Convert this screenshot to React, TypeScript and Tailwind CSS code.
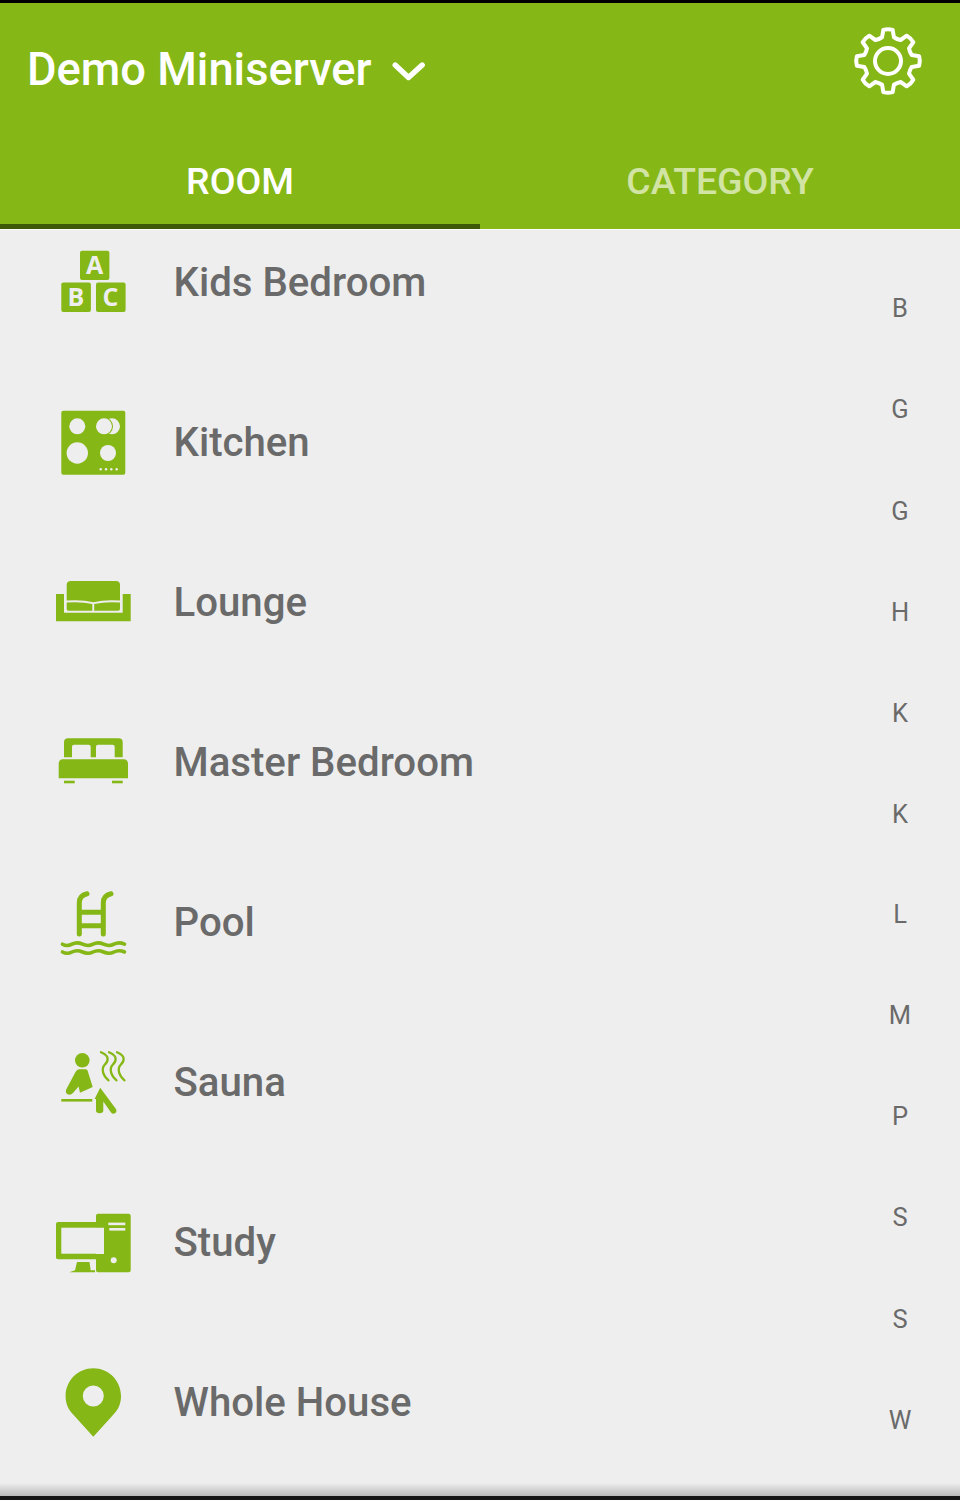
const G = "#85b716";
const BG = "#eeeeee";

function gearPath() {
  const cx = 40, cy = 40;
  const pt = (r: number, a: number) => {
    const t = ((a - 90) * Math.PI) / 180;
    return `${(cx + r * Math.cos(t)).toFixed(2)} ${(cy + r * Math.sin(t)).toFixed(2)}`;
  };
  let d = "";
  for (let i = 0; i < 8; i++) {
    const a = i * 45;
    d += `${i === 0 ? "M" : "L"}${pt(24.5, a - 14)} L${pt(31.5, a - 8.5)} Q${pt(32.5, a)} ${pt(31.5, a + 8.5)} L${pt(24.5, a + 14)} Q${pt(23.5, a + 22.5)} ${pt(24.5, a + 31)} `;
  }
  return d + "Z";
}

function Gear() {
  return (
    <svg width="80" height="80" viewBox="0 0 80 80" fill="none" stroke="white" strokeWidth="4" strokeLinejoin="round">
      <path d={gearPath()} />
      <circle cx="40" cy="40" r="13" />
    </svg>
  );
}

function Chevron() {
  return (
    <svg width="34" height="22" viewBox="0 0 34 22" fill="none" stroke="white" strokeWidth="5.4" strokeLinecap="round" strokeLinejoin="round">
      <path d="M3.2 4 L16.5 16.5 L30.2 4" />
    </svg>
  );
}

const font = "Roboto, sans-serif";

function Blocks() {
  const t = { fontFamily: "'Open Sans', sans-serif", fontWeight: 700, fontSize: 25, fill: BG, textAnchor: "middle" as const };
  return (
    <svg width="80" height="80" viewBox="0 0 80 80">
      <rect x="27" y="7.7" width="29.4" height="29.4" rx="2" fill={G} />
      <rect x="8.3" y="39.5" width="29.6" height="29.6" rx="2" fill={G} />
      <rect x="43" y="39.5" width="29.6" height="29.6" rx="2" fill={G} />
      <text x="41.7" y="31.2" {...t}>A</text>
      <text x="23" y="63" {...t}>B</text>
      <text x="57.5" y="63" {...t}>C</text>
    </svg>
  );
}

function Hob() {
  return (
    <svg width="80" height="80" viewBox="0 0 80 80">
      <rect x="8.3" y="7.7" width="64" height="64" rx="2" fill={G} />
      <circle cx="24.3" cy="23.3" r="8" fill={BG} />
      <circle cx="59" cy="23.3" r="8" fill={BG} />
      <circle cx="51" cy="23.3" r="9" fill={G} />
      <circle cx="51" cy="23.3" r="8" fill={BG} />
      <circle cx="24.3" cy="50" r="10.7" fill={BG} />
      <circle cx="55" cy="50" r="8" fill={BG} />
      {[47.7, 53, 58.3, 63.7].map((x) => (
        <circle key={x} cx={x} cy="66.3" r="1.2" fill={BG} />
      ))}
    </svg>
  );
}

function Sofa() {
  return (
    <svg width="80" height="80" viewBox="0 0 80 80" fill={G}>
      <path d="M3 31 H11 V49.7 H69.7 V31 H77.7 V58.3 H3 Z" />
      <path d="M18 18 H63 Q67 18 67 22 V37.6 Q52 36.5 40.4 39.2 Q29 36.5 13.7 37.6 V22 Q13.7 18 18 18 Z" />
      <path d="M13.7 39.6 Q28 38.5 39.3 41 V47.8 H15.5 Q13.7 47.8 13.7 46 Z" />
      <path d="M67 39.6 Q53 38.5 41.2 41 V47.8 H65 Q67 47.8 67 46 Z" />
    </svg>
  );
}

function Bed() {
  return (
    <svg width="80" height="80" viewBox="0 0 80 80" fill={G}>
      <path fillRule="evenodd" d="M15 15.3 H65.7 Q69.7 15.3 69.7 19.3 V34.3 H61.7 V23.7 Q61.7 21.7 59.7 21.7 H45 Q43 21.7 43 23.7 V34.3 H37.7 V23.7 Q37.7 21.7 35.7 21.7 H21 Q19 21.7 19 23.7 V34.3 H11 V19.3 Q11 15.3 15 15.3 Z" />
      <path d="M10 36.3 H70.7 Q75 36.3 75 41 V55.3 H5.7 V41 Q5.7 36.3 10 36.3 Z" />
      <rect x="11" y="57.7" width="10.7" height="2.6" />
      <rect x="59" y="57.7" width="10.7" height="2.6" />
    </svg>
  );
}

function Pool() {
  const wave = (y: number) =>
    `M9.5 ${y} Q14 ${y + 2.6} 19 ${y} T29.5 ${y} T40 ${y} T50.5 ${y} T61 ${y} T71.5 ${y}`;
  return (
    <svg width="80" height="80" viewBox="0 0 80 80" fill="none" stroke={G} strokeLinecap="round">
      <path d="M26.3 51 V20 Q26.3 12.5 34 10.8" strokeWidth="5" />
      <path d="M50.3 51 V20 Q50.3 12.5 58 10.8" strokeWidth="5" />
      <path d="M26.3 29.3 H50.3 M26.3 42.7 H50.3" strokeWidth="5" strokeLinecap="butt" />
      <path d={wave(61.2)} strokeWidth="3.6" />
      <path d={wave(69)} strokeWidth="3.6" />
    </svg>
  );
}

function Sauna() {
  const steam = (x: number) =>
    `M${x} 9.3 C${x + 9} 13 ${x + 7.5} 18 ${x + 3.5} 22 C${x} 26 ${x + 2} 33 ${x + 7.5} 37.3`;
  return (
    <svg width="80" height="80" viewBox="0 0 80 80" fill="none">
      <circle cx="29.3" cy="17.3" r="7.3" fill={G} />
      <path d="M26 26.3 H33 Q34.3 26.3 34.7 28 L39.7 44 L27 49.7 L25.6 43.5 L20 50 Q17.5 52.5 14.5 51.2 Q12 49.5 13.2 46.5 L22.5 29 Q24 26.3 26 26.3 Z" fill={G} />
      <path d="M8.3 57.3 H39.3" stroke={G} strokeWidth="2.6" />
      <path d="M47.2 44.7 L41.6 56 H43 V67.5 Q43 70.3 46.6 70.3 Q50.3 70.3 50.3 67.5 V58.5 L58 69.5 Q60 71.6 62.4 70 Q64.4 68 62.6 65.5 Z" fill={G} />
      <path d={steam(48)} stroke={G} strokeWidth="2.3" strokeLinecap="round" />
      <path d={steam(56)} stroke={G} strokeWidth="2.3" strokeLinecap="round" />
      <path d={steam(64)} stroke={G} strokeWidth="2.3" strokeLinecap="round" />
    </svg>
  );
}

function Computer() {
  return (
    <svg width="80" height="80" viewBox="0 0 80 80">
      <path d="M5 19 H43 V56.3 H5 Q3 56.3 3 54.3 V21 Q3 19 5 19 Z" fill={G} />
      <rect x="8.3" y="24.7" width="42.7" height="26" fill={BG} />
      <path d="M45 10.7 H75.7 Q77.7 10.7 77.7 12.7 V67.3 Q77.7 69.3 75.7 69.3 H45 Q43 69.3 43 67.3 V51 H51 V24.7 H43 V12.7 Q43 10.7 45 10.7 Z" fill={G} />
      <path d="M24 59 H36.5 L37.7 67.3 L42 67.3 V69.3 H16.3 L22 67.3 Z" fill={G} />
      <rect x="55.3" y="19.6" width="17" height="2.6" fill={BG} />
      <rect x="56.3" y="25" width="16" height="2.6" fill={BG} />
      <circle cx="60.7" cy="57.3" r="3" fill={BG} />
    </svg>
  );
}

function Pin() {
  return (
    <svg width="80" height="80" viewBox="0 0 80 80">
      <path fillRule="evenodd" d="M40.3 5.3 C55.6 5.3 68 17.7 68 33 C68 41 65 47 60 52 L40.3 73.7 L20.6 52 C15.6 47 12.6 41 12.6 33 C12.6 17.7 25 5.3 40.3 5.3 Z M40.3 22.5 A10.5 10.5 0 1 0 40.3 43.5 A10.5 10.5 0 1 0 40.3 22.5 Z" fill={G} />
    </svg>
  );
}

const rooms = [
  { name: "Kids Bedroom", Icon: Blocks },
  { name: "Kitchen", Icon: Hob },
  { name: "Lounge", Icon: Sofa },
  { name: "Master Bedroom", Icon: Bed },
  { name: "Pool", Icon: Pool },
  { name: "Sauna", Icon: Sauna },
  { name: "Study", Icon: Computer },
  { name: "Whole House", Icon: Pin },
];

const lettersTop = ["B", "G", "G", "H", "K", "K"];
const lettersBottom = ["L", "M", "P", "S", "S", "W"];

function Letter({ l }: { l: string }) {
  return (
    <div className="h-[101.2px] shrink-0 flex items-center justify-center text-[25.5px] text-[#6a6a6a]">{l}</div>
  );
}

export default function App() {
  return (
    <div className="w-[960px] h-[1500px] flex flex-col overflow-hidden bg-[#eeeeee]" style={{ fontFamily: font }}>
      <div className="h-[3px] bg-black shrink-0" />
      <div className="bg-[#85b716] h-[226px] shrink-0 flex flex-col">
        <div className="h-[133px] flex items-start pl-[27px] pr-[32px] shrink-0">
          <div className="flex items-center mt-[42px] h-[50px]">
            <span className="text-[45.3px] leading-[50px] font-medium text-white whitespace-nowrap">Demo Miniserver</span>
            <span className="ml-[20px] mt-[3px] flex"><Chevron /></span>
          </div>
          <div className="ml-auto mt-[18px] flex"><Gear /></div>
        </div>
        <div className="flex flex-1">
          <div className="w-1/2 flex flex-col">
            <div className="flex-1 flex items-center justify-center pt-[3px] text-[37.4px] font-medium text-white">ROOM</div>
            <div className="h-[5px] bg-[#3e5a08]" />
          </div>
          <div className="w-1/2 flex flex-col">
            <div className="flex-1 flex items-center justify-center pt-[3px] text-[37.4px] font-medium text-[#d2e4a3]">CATEGORY</div>
            <div className="h-[5px]" />
          </div>
        </div>
      </div>
      <div className="h-[1px] bg-white shrink-0" />
      <div className="flex-1 min-h-0 flex relative overflow-hidden">
        <div className="flex-1 flex flex-col mt-[-27px]">
          {rooms.map(({ name, Icon }) => (
            <div key={name} className="h-[160px] shrink-0 flex items-center pl-[53px]">
              <span className="flex w-[80px] h-[80px] shrink-0"><Icon /></span>
              <span className="ml-[40.5px] text-[40.2px] font-medium text-[#6a6a6a] whitespace-nowrap">{name}</span>
            </div>
          ))}
        </div>
        <div className="w-[120px] shrink-0 flex flex-col items-center pt-[27.7px]">
          {lettersTop.map((l, i) => <Letter key={i} l={l} />)}
          <div className="mt-[-1.5px]" />
          {lettersBottom.map((l, i) => <Letter key={i} l={l} />)}
        </div>
        <div className="absolute left-0 right-0 bottom-0 h-[13px] bg-gradient-to-b from-transparent to-[#b9b9b9]" />
      </div>
      <div className="h-[4px] bg-[#151515] shrink-0" />
    </div>
  );
}
